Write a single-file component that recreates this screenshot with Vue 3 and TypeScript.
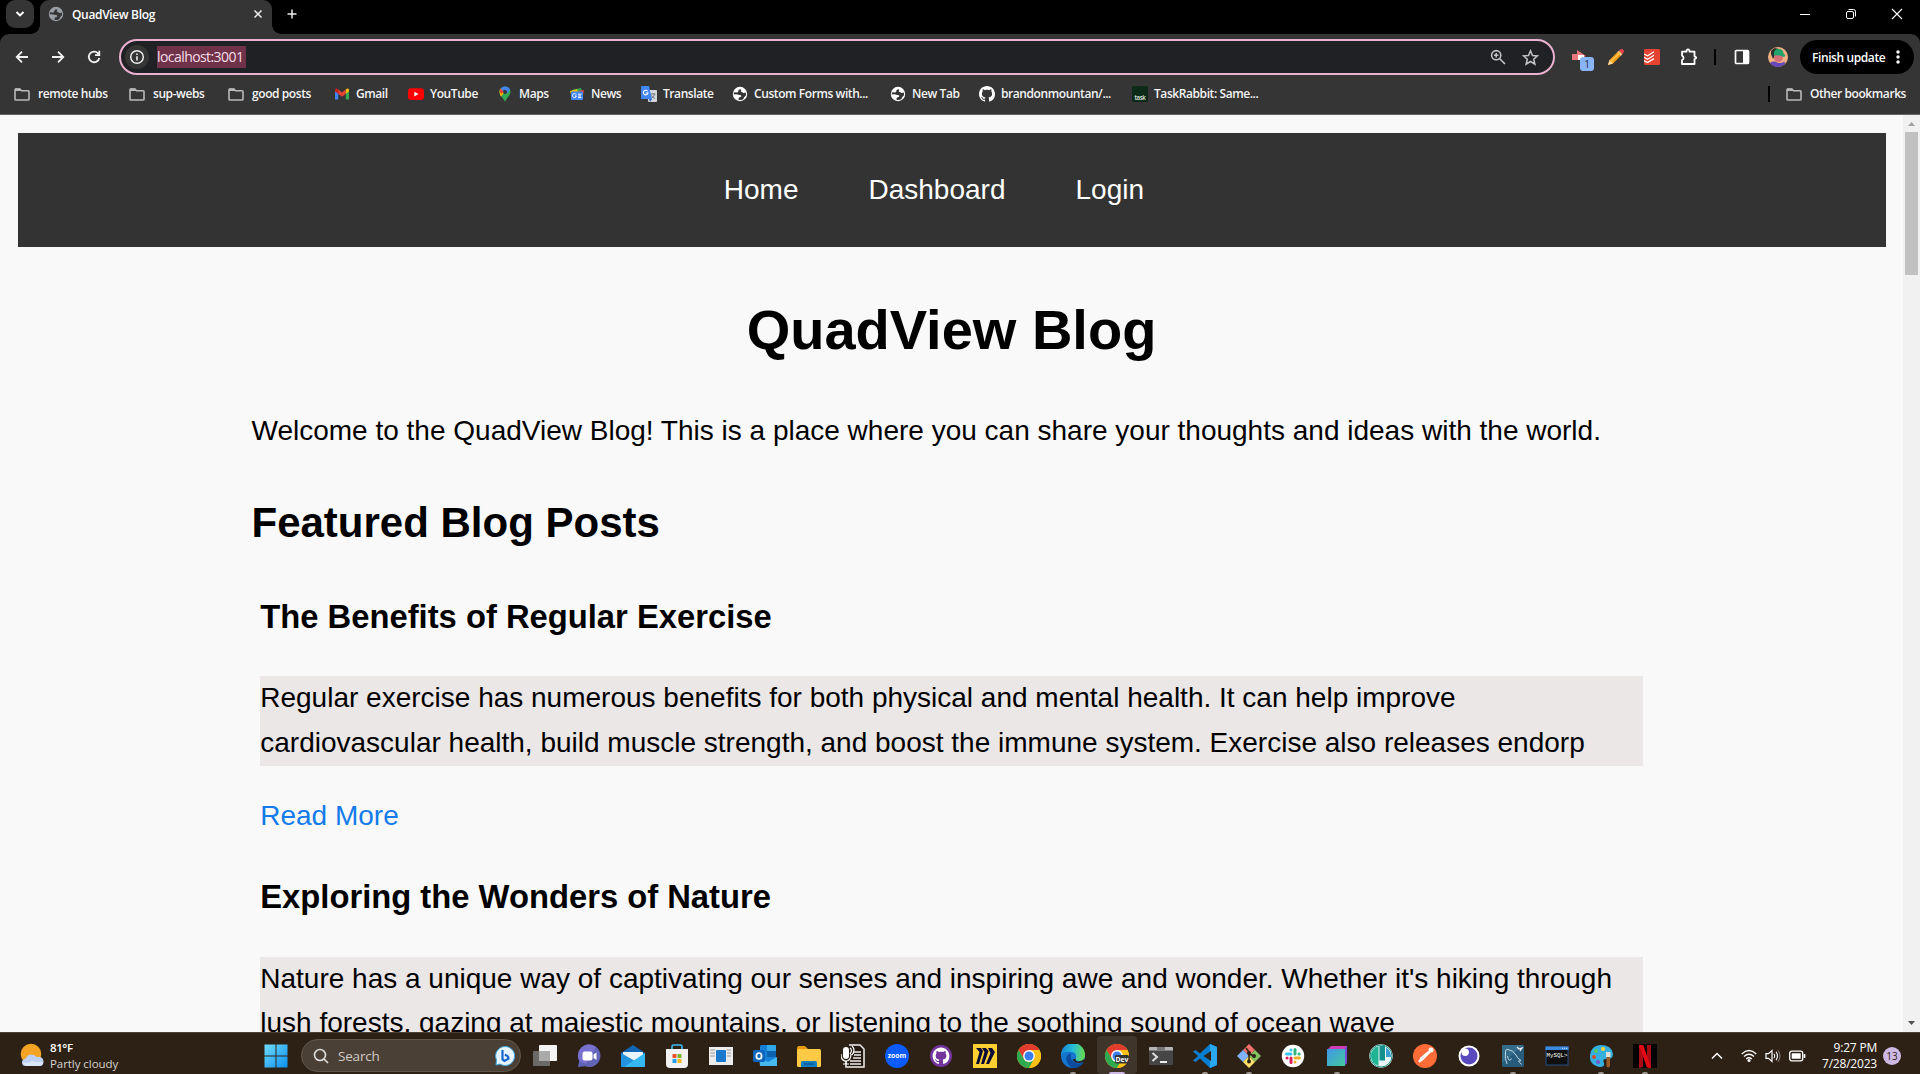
<script setup lang="ts">
interface Bookmark { label: string; icon: string; width: number; gap: number }
interface TaskApp { name: string; art: string; state?: 'open' | 'active' }
interface Post { title: string; text: string }

const folder = '<path d="M1 3.2V13.2Q1 14 1.8 14H14.200Q15 14 15 13.200V5.600Q15 4.800 14.200 4.800H7.600L5.900 3H1.800Q1 3 1 3.800Z" fill="none" stroke="#b9b9b9" stroke-width="1.6"/><path d="M1 2.500H6L8 5H1Z" fill="#b9b9b9"/>'
const globe = (c: string, bg: string) =>
  `<circle cx="8" cy="8" r="7.200" fill="${c}"/><path d="M9 3.200Q6.200 3.200 6.300 5.300Q6.200 6.600 4.800 6.400L2.200 6.300Q1.700 7.400 1.800 8.400Q4.300 7.800 5.600 8.600Q6.400 9.200 8.200 9Q9.600 9.200 9.200 10.600Q8.800 11.500 7.400 11.300Q6.400 11.500 6.500 13.800Q9.500 14.500 11.700 12.800Q11.500 11.500 12.600 10.700L14 9.300Q14.200 7.800 13.700 6.600Q12 7.400 10.800 6.700Q10.300 5.700 9 5.800Q8.300 5 9.300 4.300Z" fill="${bg}"/>`
const octocat = 'M8 0C3.580 0 0 3.580 0 8c0 3.540 2.290 6.530 5.470 7.590.4.070.55-.17.55-.38 0-.19-.01-.82-.01-1.490-2.010.37-2.530-.49-2.690-.94-.09-.23-.48-.94-.82-1.130-.28-.15-.68-.52-.01-.53.63-.01 1.080.58 1.230.82.72 1.210 1.870.87 2.330.66.07-.52.28-.87.51-1.070-1.780-.2-3.640-.89-3.640-3.950 0-.87.31-1.590.82-2.150-.08-.2-.36-1.020.08-2.120 0 0 .67-.21 2.200.82.64-.18 1.320-.27 2-.27s1.360.09 2 .27c1.530-1.040 2.200-.82 2.200-.82.44 1.100.16 1.920.08 2.120.51.56.82 1.270.82 2.150 0 3.070-1.870 3.750-3.650 3.950.29.25.54.73.54 1.480 0 1.070-.01 1.930-.01 2.200 0 .21.15.46.55.38A8.010 8.010 0 0016 8c0-4.420-3.580-8-8-8z'

const bookmarks: Bookmark[] = [
  { label: 'remote hubs', icon: folder, width: 115, gap: 8 },
  { label: 'sup-webs', icon: folder, width: 99, gap: 8 },
  { label: 'good posts', icon: folder, width: 106, gap: 8 },
  { label: 'Gmail', icon: '<path d="M1 4V13.500H4.200V7Z" fill="#4285f4"/><path d="M15 4V13.500H11.800V7Z" fill="#34a853"/><path d="M4.200 3.500L8 6.500L11.800 3.500V7.800L8 10.800L4.200 7.800Z" fill="#ea4335"/><path d="M1 4Q1.500 1.500 4.200 3.200V7.800L1 5.400Z" fill="#c5221f"/><path d="M15 4Q14.500 1.500 11.800 3.200V7.800L15 5.400Z" fill="#fbbc04"/>', width: 74, gap: 6 },
  { label: 'YouTube', icon: '<rect x="0" y="2.300" width="16" height="11.600" rx="3" fill="#f00"/><path d="M6.300 5.700V10.500L10.500 8.100Z" fill="#fff"/>', width: 89, gap: 6 },
  { label: 'Maps', icon: '<path d="M8 .5A5.500 5.500 0 0 0 2.500 6C2.500 9 5.500 11 8 15.800C10.500 11 13.500 9 13.500 6A5.500 5.500 0 0 0 8 .5Z" fill="#34a853"/><path d="M3.600 2.600L8 6L3.700 10.400Q2.500 8 2.500 6Q2.500 4 3.600 2.600Z" fill="#fbbc04"/><path d="M3.700 2.500L7 5.500L4 8Q2 5 3.700 2.500Z" fill="#ea4335"/><path d="M3.700 2.500Q5.300.5 8 .5Q12 .6 13.200 4L9 8L6 5Z" fill="#4285f4"/><circle cx="8" cy="6" r="2" fill="#353535"/>', width: 72, gap: 6 },
  { label: 'News', icon: '<path d="M3 4L12 2L14 8H3Z" fill="#34a853"/><path d="M1 5L8 3L10 9H2Z" fill="#fbbc04"/><path d="M9 5L15 4L14 10Z" fill="#ea4335"/><rect x="2" y="5.500" width="12" height="8.500" rx="1" fill="#4285f4"/><path d="M7.200 8.600A2 2 0 1 0 7.400 10H6M9 8.200H12.500M9 10H12M9 11.600H12.500" fill="none" stroke="#fff" stroke-width="1"/>', width: 72, gap: 6 },
  { label: 'Translate', icon: '<rect x="7" y="4" width="9" height="12" rx="1" fill="#d3d7dc"/><path d="M9.500 8H14.500M12 7V8M13.700 8Q13 11 10 12.500M10.500 9.500Q12 12 14 12.500" fill="none" stroke="#747a80" stroke-width="1"/><path d="M1 0H8L11 13H1Q0 13 0 12V1Q0 0 1 0Z" fill="#4285f4"/><path d="M6.600 5.200A2.300 2.300 0 1 0 7 7H4.800" fill="none" stroke="#fff" stroke-width="1.100"/><path d="M8 13H11L9 16Z" fill="#2b62c9"/>', width: 91, gap: 6 },
  { label: 'Custom Forms with...', icon: globe('#fff', '#353535'), width: 158, gap: 6 },
  { label: 'New Tab', icon: globe('#fff', '#353535'), width: 89, gap: 6 },
  { label: 'brandonmountan/...', icon: `<path fill="#fff" d="${octocat}"/>`, width: 153, gap: 6 },
  { label: 'TaskRabbit: Same...', icon: '<rect width="16" height="16" rx="1.500" fill="#0d2a18"/><text x="8" y="13.500" text-anchor="middle" font-family="Open Sans, sans-serif" font-size="6.200" font-weight="600" fill="#dce8dc">task</text>', width: 140, gap: 6 },
]

const chrome = '<circle cx="12" cy="12" r="12" fill="#fbc116"/><path d="M1.600 6A12 12 0 0 1 22.400 6H12L6.800 15Z" fill="#e33b2e"/><path d="M1.600 6L6.800 15Q9 18 12 18L9.800 23.800A12 12 0 0 1 1.600 6Z" fill="#2da94f"/><path d="M12 18L17.200 15L12 24Q10.700 24 9.800 23.800Z" fill="#2da94f"/><path d="M22.400 6H12L17.200 15L12 24A12 12 0 0 0 22.400 6Z" fill="#fbc116"/><circle cx="12" cy="12" r="5.900" fill="#fff"/><circle cx="12" cy="12" r="4.500" fill="#3b7ded"/>'

const apps: TaskApp[] = [
  { name: 'Task view', art: '<rect x="6" y="1" width="18" height="16" rx="1" fill="#f4f4f4"/><rect x="0" y="7" width="17" height="15" rx="1" fill="#777" fill-opacity=".85"/><rect x="6" y="7" width="11" height="10" fill="#aaa"/>' },
  { name: 'Chat', art: '<path d="M12.500 .500A11.300 11.300 0 1 1 8 22.300L1 23L2.200 17A11.300 11.300 0 0 1 12.500 .500Z" fill="#6264b8"/><path d="M12.500 .500A11.300 11.300 0 0 0 2.200 17L9 20L19 3Q16 1 12.500 .500Z" fill="#7970cf"/><rect x="5.500" y="7.500" width="10" height="9" rx="2" fill="#fff"/><path d="M16.500 10.500L19.500 8.500V16L16.500 14Z" fill="#fff"/>' },
  { name: 'Mail', art: '<path d="M0 9L12 1L24 9V22Q24 23 23 23H1Q0 23 0 22Z" fill="#1066b5"/><path d="M2 8H22V12L12 19L2 12Z" fill="#e8f2fa"/><path d="M0 9L14 17L5 23H1Q0 23 0 22Z" fill="#2292df"/><path d="M24 9L3 23H23Q24 23 24 22Z" fill="#35b8f1"/>' },
  { name: 'Store', art: '<path d="M7 6V2.500Q7 1 8.500 1H15.500Q17 1 17 2.500V6" fill="none" stroke="#38bdf0" stroke-width="1.600"/><path d="M1 5H23V20Q23 24 19 24H5Q1 24 1 20Z" fill="#f2f2f2"/><path d="M7.500 10H11.500V14H7.500Z" fill="#e8522d"/><path d="M12.500 10H16.500V14H12.500Z" fill="#7cb82f"/><path d="M7.500 15H11.500V19H7.500Z" fill="#20a0e8"/><path d="M12.500 15H16.500V19H12.500Z" fill="#f9b61a"/>' },
  { name: 'Layout', art: '<path d="M0 3H24V21H0Z" fill="#ececec"/><path d="M1.500 6H6M1.500 9H6M1.500 12H6M18 6H22M18 9H22M18 12H22" stroke="#999"/><rect x="7" y="6" width="10" height="12" rx="1" fill="#1b79cd"/>' },
  { name: 'Outlook', art: '<rect x="7" y="1" width="16" height="19" rx="1.500" fill="#1680d6"/><path d="M14 1H22Q23 1 23 2V7H14Z" fill="#30a8e9"/><path d="M14 7H23V13H14Z" fill="#0c61b1"/><path d="M6 13L15 18L24 13V22H7Z" fill="#45b8ef"/><rect x="0" y="6" width="12" height="12" rx="1.500" fill="#0d65bf"/><ellipse cx="6" cy="12" rx="2.600" ry="3" fill="none" stroke="#fff" stroke-width="1.700"/>' },
  { name: 'Files', art: '<path d="M0 4Q0 2 2 2H8L11 5H22V8H0Z" fill="#e69a0c"/><rect x="0" y="5" width="24" height="18" rx="1.500" fill="#fdca46"/><path d="M4 23V18.500Q4 17 5.500 17H18.500Q20 17 20 18.500V23Z" fill="#147cc0"/><path d="M7 20H17" stroke="#075a9b" stroke-width="1.500"/>' },
  { name: 'Dictation', art: '<path d="M8 1H19L23 5V23H5V17" fill="#24190f" stroke="#f1f1f1" stroke-width="1.500"/><path d="M13 8H20M13 11H20M12 14H20M9 17H20M9 20H20" stroke="#eee" stroke-width="1.300"/><rect x="2" y="3" width="6" height="12" rx="3" fill="#fff"/><path d="M0 10Q0 17 5 17Q10 17 10 10M5 17V20M2 20H8M9 4Q12 6 9 10M11 2Q15 6 11 11" fill="none" stroke="#fff" stroke-width="1.200"/>' },
  { name: 'Zoom', art: '<circle cx="12" cy="12" r="12" fill="#0b5cff"/><text x="12" y="14.200" text-anchor="middle" font-family="Open Sans, sans-serif" font-weight="700" font-size="6.800" fill="#fff">zoom</text>' },
  { name: 'GitHub', art: `<circle cx="12" cy="12" r="11" fill="#74349d"/><path transform="translate(3.600 3.600) scale(1.050)" fill="#fff" d="${octocat}"/>` },
  { name: 'Miro', art: '<rect width="24" height="24" rx=".5" fill="#fdd032"/><path d="M3 4H8L10 7L6 20H3L6.500 8Z" fill="#080b37"/><path d="M9 4H13L15.500 7L11 20H8L11.500 8Z" fill="#080b37"/><path d="M15 4H19L22 8L16 20H13L17.500 9Z" fill="#080b37"/>' },
  { name: 'Chrome', art: chrome },
  { name: 'Edge', art: '<defs><linearGradient id="edgeA" x1="0" y1=".3" x2="1" y2=".4"><stop stop-color="#1681d8"/><stop offset=".5" stop-color="#27bfd8"/><stop offset="1" stop-color="#66d94e"/></linearGradient></defs><circle cx="12" cy="12" r="12" fill="#1375cf"/><path d="M0 11A12 12 0 0 1 24 11Q24 17 18 17Q14 17 15 14Q16 9 11 8Q4 7 0 11Z" fill="url(#edgeA)"/><path d="M10 9Q3 12 6 18Q9 24 13 24Q20 23.500 23 18Q18 20.500 14 18.500Q8 16 10 9Z" fill="#0c4b9e"/><path d="M14.500 14.500Q14 18 18.500 17.300Q22 17 23.300 15L24 18L21 18.500Q14 20 11.500 15.500Z" fill="#2b2116"/>', state: 'open' },
  { name: 'Chrome Dev', art: chrome + '<rect x="10" y="11" width="14" height="8.500" rx="1.500" fill="#343434"/><text x="17" y="17.500" text-anchor="middle" font-family="Open Sans, sans-serif" font-weight="700" font-size="6.800" fill="#fff">Dev</text>', state: 'active' },
  { name: 'Terminal', art: '<rect x="0" y="3" width="24" height="18" rx="1" fill="#464646"/><path d="M1 3H23Q24 3 24 4V6.500H0V4Q0 3 1 3Z" fill="#b6b6b6"/><path d="M8 3H16V6.500H8Z" fill="#777"/><path d="M3.500 9L8 13L3.500 17" fill="none" stroke="#ddd" stroke-width="2"/><path d="M11 18H18" stroke="#fff" stroke-width="1.800"/>' },
  { name: 'VS Code', art: '<path d="M17 0L24 3V21L17 24L7 14.500L2.500 18L0 16.500L5 12L0 7.500L2.500 6L7 9.500Z" fill="#087fd0"/><path d="M17 0L24 3V21L17 24Z" fill="#29a8f0"/><path d="M18 7V17L10.500 12Z" fill="#2b2116"/>', state: 'open' },
  { name: 'Git Bash', art: '<path d="M12 0L18 6L12 12L6 6Z" fill="#f3726d"/><path d="M6 6L12 12L6 18L0 12Z" fill="#80b3ff"/><path d="M18 6L24 12L18 18L12 12Z" fill="#80c45b"/><path d="M12 12L18 18L12 24L6 18Z" fill="#ffe06a"/><path d="M9 4L12 8V18M12 10L17 12" stroke="#2b2116" stroke-width="1.500" fill="none"/><circle cx="12" cy="9" r="2" fill="#2b2116"/><circle cx="12" cy="17.500" r="2" fill="#2b2116"/><circle cx="17" cy="12" r="2" fill="#2b2116"/>', state: 'open' },
  { name: 'Slack', art: '<circle cx="12" cy="12" r="11.200" fill="#fff"/><g fill="none" stroke-width="3" stroke-linecap="round"><path d="M10 6V6.100M5.500 10H10" stroke="#36c5f0"/><path d="M14 5.500V10M18 10H18.100" stroke="#2eb67d"/><path d="M14 14H18.500M14 18V18.100" stroke="#ecb22e"/><path d="M10 14V18.500M6 14H6.100" stroke="#e01e5a"/></g>' },
  { name: 'Cube', art: '<defs><linearGradient id="cubeA" x2="1" y2="1"><stop stop-color="#3f96e8"/><stop offset="1" stop-color="#43c99c"/></linearGradient></defs><path d="M2 6L6 2H22V19L18 22Z" fill="#d03db5"/><path d="M20 4L22 2V19L19 22Z" fill="#704ddf"/><rect x="2" y="5" width="18" height="17" fill="url(#cubeA)"/>', state: 'open' },
  { name: 'Board', art: '<circle cx="12" cy="12" r="11.700" fill="#e9f5f4"/><path d="M9.500 2.300A10 10 0 0 0 9.500 21.700Z" fill="#1eb491"/><path d="M10.500 2H16V16.500H10.500Z" fill="#138f8d"/><path d="M17 3.500Q22 6.500 22 13H17Z" fill="#3c9ed0"/><circle cx="12" cy="12" r="11" fill="none" stroke="#168f80" stroke-width="1"/>' },
  { name: 'Postman', art: '<circle cx="12" cy="12" r="12" fill="#ff6c37"/><circle cx="18" cy="6" r="2.500" fill="#fff"/><path d="M16 7.500L8 14L6 18M17 8L10 15L6 18" stroke="#fff" stroke-width="1.700" fill="none"/>' },
  { name: 'Insomnia', art: '<circle cx="12" cy="12" r="10.500" fill="#fff"/><circle cx="12" cy="12" r="8.500" fill="#5849be"/><circle cx="8.200" cy="8.200" r="3.700" fill="#fff"/>' },
  { name: 'MySQL Workbench', art: '<rect x="1" y="1" width="22" height="22" rx="1.500" fill="#285c7c"/><path d="M1 1H23L1 19Z" fill="#3b7594" opacity=".65"/><path d="M6 20Q3.500 14 4.500 9Q4 5 7 5.500Q12 6 15 11Q16 14 20 16.500L17.500 17L20.500 20.500M6.500 12Q8 19 10.500 14.500" fill="none" stroke="#d0e2ed" stroke-width=".9"/><path d="M16 3L18 5L21 4L19 7" stroke="#eee" fill="none" stroke-width="1.300"/>', state: 'open' },
  { name: 'MySQL Shell', art: '<rect x="1" y="3" width="22" height="18" fill="#101010" stroke="#214c85"/><path d="M.500 2.500H23.500V6H.500Z" fill="#3d8be0"/><path d="M17 4.300H22" stroke="#d9ecff" stroke-dasharray="1 1"/><text x="12" y="12.500" text-anchor="middle" font-family="Liberation Mono, monospace" font-size="5.800" fill="#fff">MySQL&gt;</text>' },
  { name: 'Paint', art: '<path d="M11 1Q23 1 24 10Q24 16 17 15Q13 15 15 19Q16 23 11 23Q0 21 1 11Q2 2 11 1Z" fill="#34afdf"/><circle cx="7" cy="7" r="2" fill="#5cca5b"/><circle cx="14" cy="5" r="2" fill="#ffd239"/><circle cx="5" cy="13" r="2" fill="#d44f31"/><circle cx="9" cy="18" r="2" fill="#7a58c8"/><path d="M17.500 12H21V22Q19 25 17.500 22Z" fill="#9b5c25"/><path d="M17 8H21.500V13H17Z" fill="#e1dfda"/>', state: 'open' },
  { name: 'Netflix', art: '<rect width="24" height="24" fill="#050505"/><path d="M6 1H10V23L6 24ZM14 1H18V24L14 23Z" fill="#a90c14"/><path d="M6 1H10.300L18 24L14 23.500Z" fill="#e50914"/>', state: 'open' },
]

const nav: string[] = ['Home', 'Dashboard', 'Login']
const posts: Post[] = [
  { title: 'The Benefits of Regular Exercise', text: 'Regular exercise has numerous benefits for both physical and mental health. It can help improve cardiovascular health, build muscle strength, and boost the immune system. Exercise also releases endorp' },
  { title: 'Exploring the Wonders of Nature', text: "Nature has a unique way of captivating our senses and inspiring awe and wonder. Whether it's hiking through lush forests, gazing at majestic mountains, or listening to the soothing sound of ocean wave" },
]
</script>

<template>
  <div class="desktop">
    <header class="tabstrip">
      <div class="tab-search"><svg width="10" height="8" viewBox="0 0 10 8"><path d="M1.500 2L5 5.500L8.500 2" fill="none" stroke="#fff" stroke-width="1.900" /></svg></div>
      <div class="tab">
        <svg class="favicon" width="16" height="16" viewBox="0 0 16 16" v-html="globe('#9aa0a6', '#353535')"></svg>
        <span class="tab-title">QuadView Blog</span>
        <svg class="tab-close" width="10" height="10" viewBox="0 0 10 10"><path d="M1.500 1.500L8.500 8.500M8.500 1.500L1.500 8.500" stroke="#eee" stroke-width="1.500" /></svg>
      </div>
      <svg class="new-tab" width="12" height="12" viewBox="0 0 12 12"><path d="M6 1.500V10.500M1.500 6H10.500" stroke="#eee" stroke-width="1.500" /></svg>
      <div class="window-controls">
        <svg width="12" height="12" viewBox="0 0 12 12"><path d="M1 6.500H11" stroke="#fff" /></svg>
        <svg width="12" height="12" viewBox="0 0 12 12"><rect x="1.500" y="3.500" width="7" height="7" rx="1.500" fill="none" stroke="#fff" /><path d="M3.500 1.500H8.500Q10.500 1.500 10.500 3.500V8.500" fill="none" stroke="#fff" /></svg>
        <svg width="12" height="12" viewBox="0 0 12 12"><path d="M1 1L11 11M11 1L1 11" stroke="#fff" stroke-width="1.100" /></svg>
      </div>
    </header>

    <div class="under-strip">
      <div class="toolbar">
        <div class="nav-icons">
          <svg width="16" height="16" viewBox="0 0 16 16"><path d="M14 8H3M8 2.700L2.700 8L8 13.300" /></svg>
          <svg width="16" height="16" viewBox="0 0 16 16"><path d="M2 8H13M8 2.700L13.300 8L8 13.300" /></svg>
          <svg width="16" height="16" viewBox="0 0 16 16"><path d="M13.300 9A5.300 5.300 0 1 1 12 4.300L13.200 5.600M13.300 1.800V6.200H9" /></svg>
        </div>
        <div class="omnibox">
          <span class="site-info"><svg width="16" height="16" viewBox="0 0 16 16"><circle cx="8" cy="8" r="6.300" fill="none" stroke="#eee" stroke-width="1.500" /><path d="M8 7.200V11.500M8 4.500V6" stroke="#eee" stroke-width="1.600" /></svg></span>
          <span class="url">localhost:3001</span>
          <svg class="zoom-icon" width="16" height="16" viewBox="0 0 16 16"><circle cx="6.200" cy="6.200" r="4.600" fill="none" stroke="#c2c3c5" stroke-width="1.600" /><path d="M9.500 9.500L15 15M6.200 4V8.400M4 6.200H8.400" stroke="#c2c3c5" stroke-width="1.600" /></svg>
          <svg class="star-icon" width="17" height="17" viewBox="0 0 17 17"><path d="M8.500 1.800L10.500 6.500L15.500 6.900L11.700 10.200L12.900 15.200L8.500 12.500L4.100 15.200L5.300 10.200L1.500 6.900L6.500 6.500Z" fill="none" stroke="#c2c3c5" stroke-width="1.500" /></svg>
        </div>
        <div class="extensions">
          <span class="ext-arrow">
            <svg width="16" height="16" viewBox="0 0 16 16"><path d="M0 5H5V1L14 7L7 11H0Z" fill="#e9777c" /><path d="M6 6H12V11H6Z" fill="#fff" /></svg>
            <b class="ext-badge">1</b>
          </span>
          <svg width="18" height="18" viewBox="0 0 18 18"><path d="M1 17L2.500 12L12 2.500L15.500 6L6 15.500Z" fill="#f8a01c" /><path d="M12 2.500Q14 0 16 1.500Q18 3.500 15.500 6Z" fill="#e94354" /><path d="M11 3.500L14.500 7" stroke="#f5d1bd" stroke-width="1.500" /><path d="M1 17L2.500 12L6 15.500Z" fill="#fbd9a5" /><path d="M4 13.500L13 4.500" stroke="#ffc545" stroke-width="1.500" /></svg>
          <svg width="16" height="16" viewBox="0 0 16 16"><rect width="16" height="16" rx="1.200" fill="#e44332" /><path d="M0 5L3.500 6.800L10 2.800M0 8.300L3.500 10.200L10 6.200M0 11.700L3.500 13.500L10 9.600" fill="none" stroke="#fff" stroke-width="1.300" /></svg>
          <svg width="18" height="18" viewBox="0 0 18 18"><path d="M2 3.700H6.500V2.500Q8 .3 9.500 2.500V3.700H14.500V8.300Q18 9.700 14.500 11.200V16H2V12.200Q5.200 10 2 7.500Z" fill="none" stroke="#fff" stroke-width="1.800" stroke-linejoin="round" /></svg>
          <i class="divider"></i>
          <svg width="16" height="16" viewBox="0 0 16 16"><rect x="1.500" y="1.500" width="13" height="13" rx="1" fill="none" stroke="#fff" stroke-width="1.700" /><path d="M9 1.500H14.500V14.500H9Z" fill="#fff" /></svg>
          <svg width="20" height="20" viewBox="0 0 20 20"><circle cx="10" cy="10" r="10" fill="#f0b183" /><path d="M3 7Q2 3 7 1L11 2L7 8L5 12Z" fill="#28302c" /><circle cx="10.500" cy="10.500" r="4.500" fill="#d66f78" /><path d="M6 8.500Q5 1.500 11 2Q15 2 15.500 6.500Q18.500 8.500 16 10Q10 7.500 6 8.500Z" fill="#23a26c" /><path d="M2 16Q6 13.500 9 15.500Q13 17 16.500 14.500L17 17Q14 20 10 20Q5 20 2 16Z" fill="#6547b9" /></svg>
        </div>
        <div class="update-pill">Finish update<svg width="4" height="14" viewBox="0 0 4 14"><circle cx="2" cy="2" r="1.700" fill="#fff" /><circle cx="2" cy="7" r="1.700" fill="#fff" /><circle cx="2" cy="12" r="1.700" fill="#fff" /></svg></div>
      </div>
      <div class="bookmarks">
        <div v-for="b in bookmarks" :key="b.label" class="bookmark" :style="{ width: b.width + 'px', gap: b.gap + 'px' }">
          <svg width="16" height="16" viewBox="0 0 16 16" v-html="b.icon"></svg><span>{{ b.label }}</span>
        </div>
        <div class="other">
          <i class="divider"></i><svg width="16" height="16" viewBox="0 0 16 16" v-html="folder"></svg><span>Other bookmarks</span>
        </div>
      </div>
    </div>

    <div class="viewport">
      <main class="page">
        <nav class="site-nav"><a v-for="n in nav" :key="n">{{ n }}</a></nav>
        <div class="container">
          <h1>QuadView Blog</h1>
          <p class="welcome">Welcome to the QuadView Blog! This is a place where you can share your thoughts and ideas with the world.</p>
          <h2>Featured Blog Posts</h2>
          <article v-for="p in posts" :key="p.title">
            <h3>{{ p.title }}</h3>
            <p class="excerpt">{{ p.text }}</p>
            <a class="more">Read More</a>
          </article>
        </div>
      </main>
      <aside class="scrollbar">
        <svg width="17" height="17" viewBox="0 0 17 17"><path d="M5 11L8.500 7L12 11Z" fill="#a3a3a3" /></svg>
        <div class="thumb"></div>
        <svg class="down" width="17" height="17" viewBox="0 0 17 17"><path d="M5 6L8.500 10L12 6Z" fill="#505050" /></svg>
      </aside>
    </div>

    <footer class="taskbar">
      <div class="weather">
        <svg width="24" height="24" viewBox="0 0 24 24"><circle cx="11" cy="11" r="10.300" fill="#f4a323" /><path d="M6 23Q2 23 2 19.500Q2 16 6 15.500Q7 11.500 11.500 11.500Q15 11.500 16.500 14Q22.500 13 23.500 18Q24 23 19 23Z" fill="#bed1f3" /><path d="M6 23Q3 22 2.500 19Q8 21 12 18Q18 20 23 19Q23 23 19 23Z" fill="#dce7fc" /></svg>
        <div><b>81°F</b><span>Partly cloudy</span></div>
      </div>
      <svg class="start" width="24" height="24" viewBox="0 0 24 24"><defs><linearGradient id="winA" x2="1" y2="1"><stop stop-color="#6fdcff" /><stop offset="1" stop-color="#0b8fee" /></linearGradient></defs><path d="M.500 .500H11.500V11.500H.500ZM12.500 .500H23.500V11.500H12.500ZM.500 12.500H11.500V23.500H.500ZM12.500 12.500H23.500V23.500H12.500Z" fill="url(#winA)" /></svg>
      <div class="search">
        <svg width="16" height="16" viewBox="0 0 16 16"><circle cx="7" cy="7" r="5.500" fill="none" stroke="#ddd" stroke-width="1.600" /><path d="M11 11L15 15" stroke="#ddd" stroke-width="1.700" /></svg>
        <span>Search</span>
        <svg class="bing" width="20" height="20" viewBox="0 0 20 20"><path d="M10 .5A9.500 9.500 0 1 1 5 18L1 19L1.500 14A9.500 9.500 0 0 1 10 .5Z" fill="#e5f5ff" stroke="#3fa5e5" /><path d="M7.500 4V13.500L9.500 15L13.500 12.700Q13.500 9.700 9.800 8.800" fill="none" stroke="#1766cd" stroke-width="2.200" /></svg>
      </div>
      <div class="apps">
        <div v-for="a in apps" :key="a.name" class="app" :class="a.state"><svg width="24" height="24" viewBox="0 0 24 24" v-html="a.art"></svg></div>
      </div>
      <div class="tray">
        <svg class="chev" width="12" height="8" viewBox="0 0 12 8"><path d="M1 6.500L6 1.500L11 6.500" fill="none" stroke="#fff" stroke-width="1.500" /></svg>
        <svg class="wifi" width="16" height="14" viewBox="0 0 16 14"><path d="M.700 5Q8 -2 15.300 5M3 7.500Q8 3 13 7.500M5.200 9.900Q8 7.600 10.800 9.900" fill="none" stroke="#fff" stroke-width="1.300" /><circle cx="8" cy="11.500" r="1.500" fill="#fff" /></svg>
        <svg class="vol" width="16" height="14" viewBox="0 0 16 14"><path d="M1 4.700H3.500L7 1.500V12.500L3.500 9.300H1Z" fill="none" stroke="#fff" stroke-width="1.200" /><path d="M9 4.700Q10.500 7 9 9.300M11 2.800Q14 7 11 11.200" fill="none" stroke="#fff" stroke-width="1.100" /><path d="M13 1.200Q17 7 13 12.800" fill="none" stroke="#81786e" stroke-width="1.100" /></svg>
        <svg class="bat" width="17" height="12" viewBox="0 0 17 12"><rect x=".700" y="1.200" width="13" height="9.600" rx="2" fill="none" stroke="#fff" stroke-width="1.300" /><rect x="2.700" y="3.200" width="9" height="5.600" rx=".5" fill="#fff" /><path d="M15.500 4V8" stroke="#fff" stroke-width="1.700" /></svg>
        <div class="clock"><span>9:27 PM</span><span>7/28/2023</span></div>
        <b class="notices">13</b>
      </div>
    </footer>
  </div>
</template>

<style>
html, body { margin: 0; overflow: hidden; background: #f9f9f9; }
</style>

<style scoped>
* { box-sizing: border-box; }
svg { display: block; flex: none; }
.desktop { width: 1920px; height: 1074px; display: flex; flex-direction: column; overflow: hidden; font-family: "Open Sans", sans-serif; }

.tabstrip { height: 34px; flex: none; background: #000; display: flex; align-items: flex-start; }
.tab-search { width: 28px; height: 28px; margin-left: 6px; border-radius: 9px; background: #353535; display: flex; align-items: center; justify-content: center; }
.tab { position: relative; width: 232px; height: 34px; margin-left: 6px; padding: 0 9px 6px 8px; background: #353535; border-radius: 9px 9px 0 0; display: flex; align-items: center; }
.tab::before, .tab::after { content: ""; position: absolute; bottom: 0; width: 9px; height: 9px; }
.tab::before { left: -9px; background: radial-gradient(circle at 0 0, #000 8.500px, #353535 9px); }
.tab::after { right: -9px; background: radial-gradient(circle at 100% 0, #000 8.500px, #353535 9px); }
.tab-title { margin-left: 8px; color: #fff; font-size: 12px; font-weight: 650; letter-spacing: -0.340px; white-space: nowrap; }
.tab-close { margin-left: auto; }
.new-tab { margin: 8px 0 0 14px; }
.window-controls { margin: 8px 17px 0 auto; display: flex; gap: 34px; }

.under-strip { height: 81px; flex: none; background: #000; color: #f4f4f4; }
.toolbar { height: 46px; background: #353535; border-radius: 9px 9px 0 0; display: flex; align-items: center; }
.nav-icons { display: flex; gap: 20px; margin-left: 14px; width: 105px; }
.nav-icons path { fill: none; stroke: #f2f2f2; stroke-width: 1.800px; }
.omnibox { width: 1436px; height: 36px; border: 2px solid #eab1d1; border-radius: 18px; background: #202124; display: flex; align-items: center; padding-left: 4px; }
.site-info { width: 24px; height: 24px; border-radius: 50%; background: #353535; display: flex; align-items: center; justify-content: center; }
.url { height: 22px; margin-left: 8px; width: 89px; line-height: 21px; background: #703248; color: #f5dfe8; font-size: 14px; letter-spacing: -0.570px; white-space: nowrap; }
.zoom-icon { margin-left: auto; }
.star-icon { margin: 0 14px 0 16px; }
.extensions { display: flex; align-items: center; }
.ext-arrow { position: relative; width: 16px; height: 16px; margin-left: 17px; }
.extensions > svg:nth-of-type(1) { margin-left: 19px; }
.extensions > svg:nth-of-type(2) { margin-left: 19px; }
.extensions > svg:nth-of-type(3) { margin-left: 20px; }
.extensions > svg:nth-of-type(4) { margin-left: 18px; }
.extensions > svg:nth-of-type(5) { margin-left: 18px; }
.extensions .divider { margin-left: 16px; }
.ext-badge { position: absolute; left: 8px; top: 8px; width: 14px; height: 14px; border-radius: 3px; background: #8ab4f8; color: #202c40; font-size: 10px; line-height: 14px; text-align: center; font-weight: 400; }
.divider { width: 2px; height: 16px; background: #000; flex: none; }
.update-pill { width: 114px; height: 34px; margin-left: 12px; border-radius: 17px; background: #000; color: #fff; font-size: 12px; font-weight: 650; letter-spacing: -0.400px; display: flex; align-items: center; justify-content: space-between; padding: 0 14px 0 12px; white-space: nowrap; }
.bookmarks { height: 35px; background: #353535; border-bottom: 1px solid #656565; padding: 0 0 6px 14px; display: flex; align-items: center; font-size: 12px; font-weight: 650; letter-spacing: -0.420px; white-space: nowrap; }
.bookmarks span { margin-top: -1px; }
.bookmark { display: flex; align-items: center; flex: none; }
.other { display: flex; align-items: center; margin-left: auto; width: 152px; }
.other svg { margin: 0 8px 0 16px; }

.viewport { flex: 1; min-height: 0; display: flex; background: #f9f9f9; }
.page { flex: 1; overflow: hidden; padding: 17.500px; font-family: "Liberation Sans", Arial, sans-serif; font-size: 28px; line-height: 44.800px; color: #000; }
.site-nav { height: 114.300px; background: #333; color: #fff; display: flex; align-items: center; gap: 70px; padding: 1.500px 0 0 706.300px; }
.container { width: 1400px; margin: 0 auto; }
h1, h2, h3, p { margin: 0; }
h1 { margin-top: 38px; font-size: 56px; line-height: 89.600px; text-align: center; }
.welcome { margin-top: 34.700px; }
h2 { margin: 35.100px 0 34.860px; font-size: 42px; line-height: 67.200px; }
article { margin: 0 8.750px; }
article + article { margin-top: 32.760px; }
h3 { margin-bottom: 32.760px; font-size: 32.760px; line-height: 52.420px; }
.excerpt { background: #ebe7e6; margin-bottom: 28px; }
.more { display: block; color: #147bea; }
.scrollbar { width: 17px; background: #f1f1f1; display: flex; flex-direction: column; align-items: center; }
.thumb { width: 13px; height: 143px; background: #c1c1c1; }
.down { margin-top: auto; }

.taskbar { height: 42px; flex: none; background: #2d2116; border-top: 1px solid #4a4037; display: flex; align-items: flex-start; color: #fff; }
.weather { display: flex; width: 264px; padding: 10px 0 0 20px; font-size: 11.500px; line-height: 16px; white-space: nowrap; }
.weather div { margin: -3px 0 0 6px; display: flex; flex-direction: column; }
.weather b { font-weight: 600; font-size: 11.500px; letter-spacing: -0.400px; }
.weather span { color: #d8d3ce; letter-spacing: -0.060px; }
.start { margin-top: 11px; }
.search { width: 220px; height: 33px; margin: 6px 0 0 13px; border: 1px solid #62574c; border-radius: 17px; background: #4b4036; display: flex; align-items: center; padding: 0 5px 0 11px; font-size: 13.500px; color: #d2cbc4; letter-spacing: -0.200px; }
.search span { margin-left: 9px; }
.bing { margin-left: auto; }
.apps { display: flex; margin-left: 2px; }
.app { position: relative; width: 44px; height: 41px; padding: 11px 10px 0; }
.app.active::before { content: ""; position: absolute; left: 2px; top: 3px; width: 40px; height: 38px; border-radius: 4px; background: #40352b; }
.app svg { position: relative; }
.app.open::after, .app.active::after { content: ""; position: absolute; left: 19px; bottom: 0; width: 6px; height: 2px; border-radius: 2px 2px 0 0; background: #9c958e; }
.app.active::after { left: 14px; width: 16px; background: #cdb9e3; }
.tray { display: flex; align-items: flex-start; margin-left: auto; padding-right: 19px; }
.chev { margin: 19px 18px 0 0; }
.wifi { margin: 16px 8px 0 0; }
.vol { margin: 16px 8px 0 0; }
.bat { margin: 17px 0 0; }
.clock { width: 71px; margin-top: 7px; display: flex; flex-direction: column; align-items: flex-end; font-size: 12px; line-height: 16px; letter-spacing: -0.200px; }
.notices { width: 18px; height: 18px; margin: 14px 0 0 6px; border-radius: 50%; background: #cdb9e3; color: #2d2116; font-size: 10px; line-height: 18px; text-align: center; font-weight: 400; }
</style>
